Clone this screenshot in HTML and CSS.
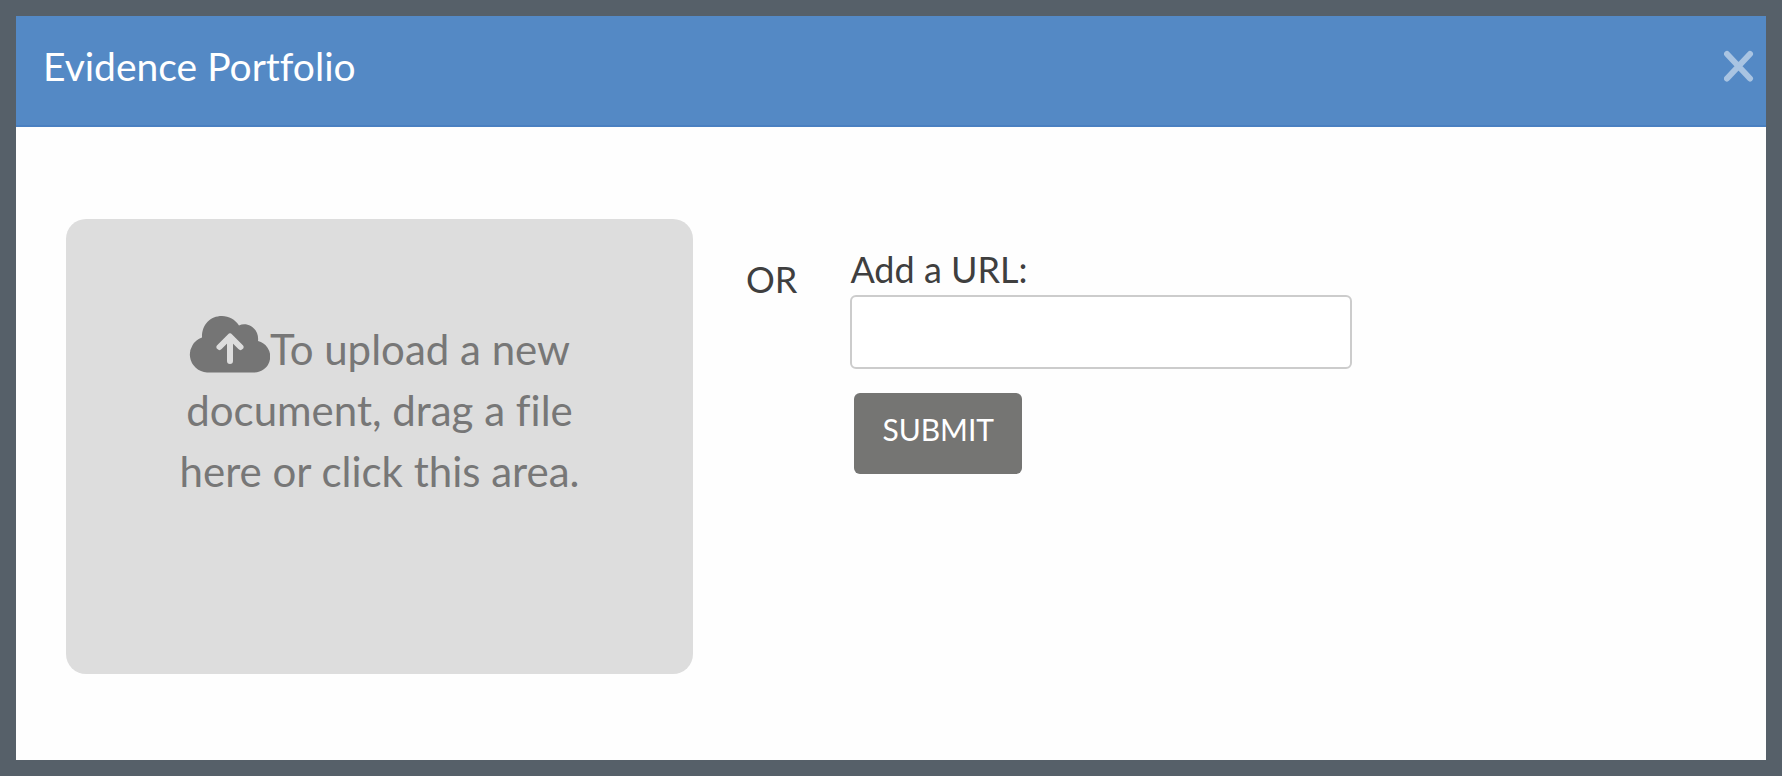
FILE: index.html
```html
<!DOCTYPE html>
<html lang="en">
<head>
<meta charset="utf-8">
<meta name="viewport" content="width=device-width, initial-scale=1">
<title>Evidence Portfolio</title>
<link rel="stylesheet" href="styles.css">
</head>
<body>
<main class="modal" role="dialog" aria-labelledby="modal-title">
  <header class="modal-header">
    <h1 class="modal-title" id="modal-title">Evidence Portfolio</h1>
    <button class="close" type="button" aria-label="Close">
      <svg class="close-icon" viewBox="0 0 30 32" aria-hidden="true"><path d="M3 4L26 28.500M26 4L3 28.500"/></svg>
    </button>
  </header>
  <div class="modal-body">
    <label class="dropzone" for="evidence-file">
      <input class="file-input" id="evidence-file" type="file">
      <span class="dropzone-text"><svg class="cloud-icon" viewBox="0 0 81 58" aria-hidden="true"><path class="cloud" d="M18 57.500A18 18 0 0 1 13 22.500C12.500 10 21 1 33 1C40 1 46 4.500 50 10.500C58.500 6.500 70.500 13.500 69 26A16 16 0 0 1 64 57.500Z"/><path class="arrow" d="M41 46V22M30.500 32L41 21.500L51.500 32"/></svg>To upload a new document, drag a file here or click this area.</span>
    </label>
    <span class="or">OR</span>
    <form class="url-form">
      <label class="url-label" for="evidence-url">Add a URL:</label>
      <input class="url-input" id="evidence-url" type="text">
      <button class="submit" type="submit">SUBMIT</button>
    </form>
  </div>
</main>
</body>
</html>
```

FILE: styles.css
```css
* {
  box-sizing: border-box;
}

body {
  display: flex;
  min-height: 100vh;
  margin: 0;
  padding: 16px;
  background: #566069;
  color: #3f3f3f;
  font-family: Lato, "Open Sans", sans-serif;
  font-variant-ligatures: none;
}

.modal {
  flex: 1;
  background: #fefefe;
}

.modal-header {
  display: flex;
  align-items: center;
  justify-content: space-between;
  padding: 26px 12px 35px 27px;
  border-bottom: 2px solid #4a80c1;
  background: #5489c5;
}

.modal-title {
  margin: 0;
  color: #fff;
  font-size: 39px;
  font-weight: 400;
  line-height: 48px;
}

.close {
  display: flex;
  padding: 0;
  border: 0;
  background: none;
  cursor: pointer;
}

.close-icon {
  width: 30px;
  height: 32px;
  fill: none;
  stroke: #a9c4e2;
  stroke-width: 6;
  stroke-linecap: round;
}

.modal-body {
  display: flex;
  align-items: flex-start;
  gap: 53px;
  padding: 92px 50px 86px;
}

.dropzone {
  flex: 0 0 38%;
  padding: 96px 108px 172px;
  border-radius: 20px;
  background: #ddd;
  color: #777;
  text-align: center;
  cursor: pointer;
}

.dropzone-text {
  display: block;
  font-size: 42px;
  line-height: 61px;
}

.file-input {
  position: absolute;
  width: 1px;
  height: 1px;
  opacity: 0;
}

.cloud-icon {
  width: 81px;
  height: 58px;
  vertical-align: -8px;
}

.cloud {
  fill: #757575;
}

.arrow {
  fill: none;
  stroke: #ddd;
  stroke-width: 6;
  stroke-linecap: round;
  stroke-linejoin: round;
}

.or {
  padding-top: 38px;
  font-size: 36px;
  line-height: 44px;
}

.url-form {
  display: flex;
  flex: 1;
  flex-direction: column;
  align-items: flex-start;
  padding-top: 28px;
}

.url-label {
  font-size: 36px;
  line-height: 44px;
}

.url-input {
  width: 58%;
  height: 74px;
  margin-top: 4px;
  padding: 0 16px;
  border: 2px solid #ccc;
  border-radius: 6px;
  background: #fff;
  color: inherit;
  font: inherit;
  font-size: 32px;
}

.submit {
  margin: 24px 4px 0;
  padding: 18px 28px 27px;
  border: 0;
  border-radius: 6px;
  background: #757573;
  color: #fff;
  font-family: inherit;
  font-size: 30px;
  line-height: 36px;
  cursor: pointer;
}
```
